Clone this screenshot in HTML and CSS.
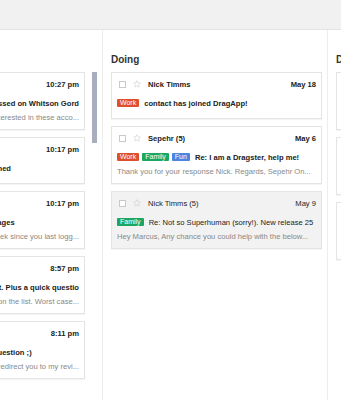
FILE: index.html
```html
<!DOCTYPE html>
<html lang="en">
<head>
  <meta charset="UTF-8">
  <meta name="viewport" content="width=device-width, initial-scale=1.0">
  <title>DragApp Board</title>
  <link rel="stylesheet" href="styles.css">
</head>
<body>

  <header class="topbar"></header>

  <main class="board">

    <!-- first column is scrolled, only its right part shows -->
    <section class="column column-scroll">
      <h2 class="column-title">To Do</h2>
      <div class="column-body">
        <div class="card-list">

          <div class="card">
            <div class="card-head">
              <span class="check"></span>
              <svg class="star" viewBox="0 0 10 10"><path d="M5 .8l1.3 2.7 2.9.4-2.1 2 .5 2.9L5 7.4 2.4 8.8l.5-2.9-2.1-2 2.9-.4z"/></svg>
              <span class="sender">Whitson Gordon</span>
              <span class="date">10:27 pm</span>
            </div>
            <div class="card-subject tail"><span class="subject">Your application was processed on Whitson Gord</span></div>
            <div class="card-preview tail"><span>We noticed you might be interested in these acco...</span></div>
          </div>

          <div class="card">
            <div class="card-head">
              <span class="check"></span>
              <svg class="star" viewBox="0 0 10 10"><path d="M5 .8l1.3 2.7 2.9.4-2.1 2 .5 2.9L5 7.4 2.4 8.8l.5-2.9-2.1-2 2.9-.4z"/></svg>
              <span class="sender">DragApp</span>
              <span class="date">10:17 pm</span>
            </div>
            <div class="card-subject"><span class="subject">Marcus Holloway has now joined</span></div>
          </div>

          <div class="card">
            <div class="card-head">
              <span class="check"></span>
              <svg class="star" viewBox="0 0 10 10"><path d="M5 .8l1.3 2.7 2.9.4-2.1 2 .5 2.9L5 7.4 2.4 8.8l.5-2.9-2.1-2 2.9-.4z"/></svg>
              <span class="sender">DragApp</span>
              <span class="date">10:17 pm</span>
            </div>
            <div class="card-subject"><span class="subject">You have 3 new unread messages</span></div>
            <div class="card-preview tail"><span>Here is what happened on DragApp this week since you last logg...</span></div>
          </div>

          <div class="card">
            <div class="card-head">
              <span class="check"></span>
              <svg class="star" viewBox="0 0 10 10"><path d="M5 .8l1.3 2.7 2.9.4-2.1 2 .5 2.9L5 7.4 2.4 8.8l.5-2.9-2.1-2 2.9-.4z"/></svg>
              <span class="sender">Sepehr</span>
              <span class="date">8:57 pm</span>
            </div>
            <div class="card-subject tail"><span class="subject">Re: Release notes draft. Plus a quick questio</span></div>
            <div class="card-preview tail"><span>I moved your ticket up on the list. Worst case...</span></div>
          </div>

          <div class="card">
            <div class="card-head">
              <span class="check"></span>
              <svg class="star" viewBox="0 0 10 10"><path d="M5 .8l1.3 2.7 2.9.4-2.1 2 .5 2.9L5 7.4 2.4 8.8l.5-2.9-2.1-2 2.9-.4z"/></svg>
              <span class="sender">Nick Timms</span>
              <span class="date">8:11 pm</span>
            </div>
            <div class="card-subject"><span class="subject">Hello, can I ask you a quick question ;)</span></div>
            <div class="card-preview tail"><span>If you have a minute I'd like to redirect you to my revi...</span></div>
          </div>

        </div>
        <div class="scrollbar"><div class="scrollbar-thumb"></div></div>
      </div>
    </section>

    <section class="column">
      <h2 class="column-title">Doing</h2>
      <div class="card-list">

        <div class="card">
          <div class="card-head">
            <span class="check"></span>
            <svg class="star" viewBox="0 0 10 10"><path d="M5 .8l1.3 2.7 2.9.4-2.1 2 .5 2.9L5 7.4 2.4 8.8l.5-2.9-2.1-2 2.9-.4z"/></svg>
            <span class="sender">Nick Timms</span>
            <span class="date">May 18</span>
          </div>
          <div class="card-subject">
            <span class="label label-work">Work</span>
            <span class="subject">contact has joined DragApp!</span>
          </div>
        </div>

        <div class="card">
          <div class="card-head">
            <span class="check"></span>
            <svg class="star" viewBox="0 0 10 10"><path d="M5 .8l1.3 2.7 2.9.4-2.1 2 .5 2.9L5 7.4 2.4 8.8l.5-2.9-2.1-2 2.9-.4z"/></svg>
            <span class="sender">Sepehr (5)</span>
            <span class="date">May 6</span>
          </div>
          <div class="card-subject">
            <span class="label label-work">Work</span>
            <span class="label label-family">Family</span>
            <span class="label label-fun">Fun</span>
            <span class="subject">Re: I am a Dragster, help me!</span>
          </div>
          <div class="card-preview">Thank you for your response Nick. Regards, Sepehr On...</div>
        </div>

        <div class="card read">
          <div class="card-head">
            <span class="check"></span>
            <svg class="star" viewBox="0 0 10 10"><path d="M5 .8l1.3 2.7 2.9.4-2.1 2 .5 2.9L5 7.4 2.4 8.8l.5-2.9-2.1-2 2.9-.4z"/></svg>
            <span class="sender">Nick Timms (5)</span>
            <span class="date">May 9</span>
          </div>
          <div class="card-subject">
            <span class="label label-family">Family</span>
            <span class="subject">Re: Not so Superhuman (sorry!). New release 25</span>
          </div>
          <div class="card-preview">Hey Marcus, Any chance you could help with the below...</div>
        </div>

      </div>
    </section>

    <section class="column">
      <h2 class="column-title">Done</h2>
      <div class="card-list">

        <div class="card">
          <div class="card-head">
            <span class="check"></span>
            <svg class="star" viewBox="0 0 10 10"><path d="M5 .8l1.3 2.7 2.9.4-2.1 2 .5 2.9L5 7.4 2.4 8.8l.5-2.9-2.1-2 2.9-.4z"/></svg>
            <span class="sender">Sepehr</span>
            <span class="date">May 2</span>
          </div>
          <div class="card-subject"><span class="subject">Weekly sync notes</span></div>
          <div class="card-preview">Here are the notes from today...</div>
        </div>

        <div class="card">
          <div class="card-head">
            <span class="check"></span>
            <svg class="star" viewBox="0 0 10 10"><path d="M5 .8l1.3 2.7 2.9.4-2.1 2 .5 2.9L5 7.4 2.4 8.8l.5-2.9-2.1-2 2.9-.4z"/></svg>
            <span class="sender">Nick Timms</span>
            <span class="date">Apr 28</span>
          </div>
          <div class="card-subject"><span class="subject">Invoice for April</span></div>
          <div class="card-preview">Please find attached the invoice...</div>
        </div>

        <div class="card">
          <div class="card-head">
            <span class="check"></span>
            <svg class="star" viewBox="0 0 10 10"><path d="M5 .8l1.3 2.7 2.9.4-2.1 2 .5 2.9L5 7.4 2.4 8.8l.5-2.9-2.1-2 2.9-.4z"/></svg>
            <span class="sender">DragApp</span>
            <span class="date">Apr 21</span>
          </div>
          <div class="card-subject"><span class="subject">Welcome to DragApp</span></div>
          <div class="card-preview">Get started by dragging your first email...</div>
        </div>

      </div>
    </section>

  </main>

</body>
</html>
```

FILE: styles.css
```css
html, body {
overflow: hidden;
}

body {
margin: 0;
font-family: "Liberation Sans", Arial, sans-serif;
font-size: 7.6px;
color: #222;
background-color: #fff;
}

.topbar {
height: 29px;
background-color: #f1f1f1;
border-bottom: 1px solid #e3e3e3;
}

.board {
display: flex;
margin-left: -122px; /* board is scrolled sideways */
height: 370px;
}

.column {
flex: 0 0 225px;
width: 225px;
min-width: 0;
box-sizing: border-box;
padding: 24px 5px 0 8px;
border-right: 1px solid #ededed;
overflow: hidden;
}

.column-title {
margin: 0 0 6px;
font-size: 10px;
line-height: 12px;
font-weight: bold;
color: #333;
}

.column-scroll {
padding-right: 0;
}

.column-body {
display: flex;
align-items: flex-start;
}

.card-list {
flex: 1;
min-width: 0;
display: flex;
flex-direction: column;
gap: 7px;
}

.scrollbar {
flex: 0 0 5px;
margin: 0 5px 0 7px;
}

.scrollbar-thumb {
height: 71px;
background-color: #a8aebe;
}

/* cards */
.card {
border: 1px solid #e4e4e4;
background-color: #fff;
padding: 5px 5px 6px;
box-shadow: 0 1px 1px rgba(0, 0, 0, 0.04);
}

.card.read {
background-color: #f2f2f2;
}

.card-head {
display: flex;
align-items: center;
height: 12px;
white-space: nowrap;
}

.check {
flex: 0 0 7px;
height: 7px;
box-sizing: border-box;
margin-left: 2px;
border: 1px solid #c9c9c9;
background-color: #fff;
}

.star {
flex: 0 0 8px;
height: 8px;
margin-left: 7px;
fill: none;
stroke: #cfcfcf;
stroke-width: 0.8;
}

.sender {
margin-left: 7px;
font-weight: bold;
}

.date {
margin-left: auto;
font-weight: bold;
}

.read .sender,
.read .date,
.read .subject {
font-weight: normal;
}

.card-subject {
display: flex;
align-items: center;
height: 12px;
margin-top: 7px;
white-space: nowrap;
overflow: hidden;
}

.card-subject:last-child {
margin-bottom: 3px;
}

.subject {
font-weight: bold;
}

.label + .subject {
margin-left: 2px;
}

.card-preview {
margin-top: 3px;
line-height: 11px;
color: #888;
white-space: nowrap;
overflow: hidden;
text-overflow: ellipsis;
}

/* lines cut on the left, show the end of the text */
.card-subject.tail,
.card-preview.tail {
display: flex;
justify-content: flex-end;
}

.label {
color: #fff;
font-size: 7px;
line-height: 8px;
padding: 0 3px;
margin-right: 3px;
border-radius: 1px;
}

.label-work {
background-color: #de4f2e;
}

.label-family {
background-color: #1ba664;
}

.label-fun {
background-color: #4a86e0;
}
```
